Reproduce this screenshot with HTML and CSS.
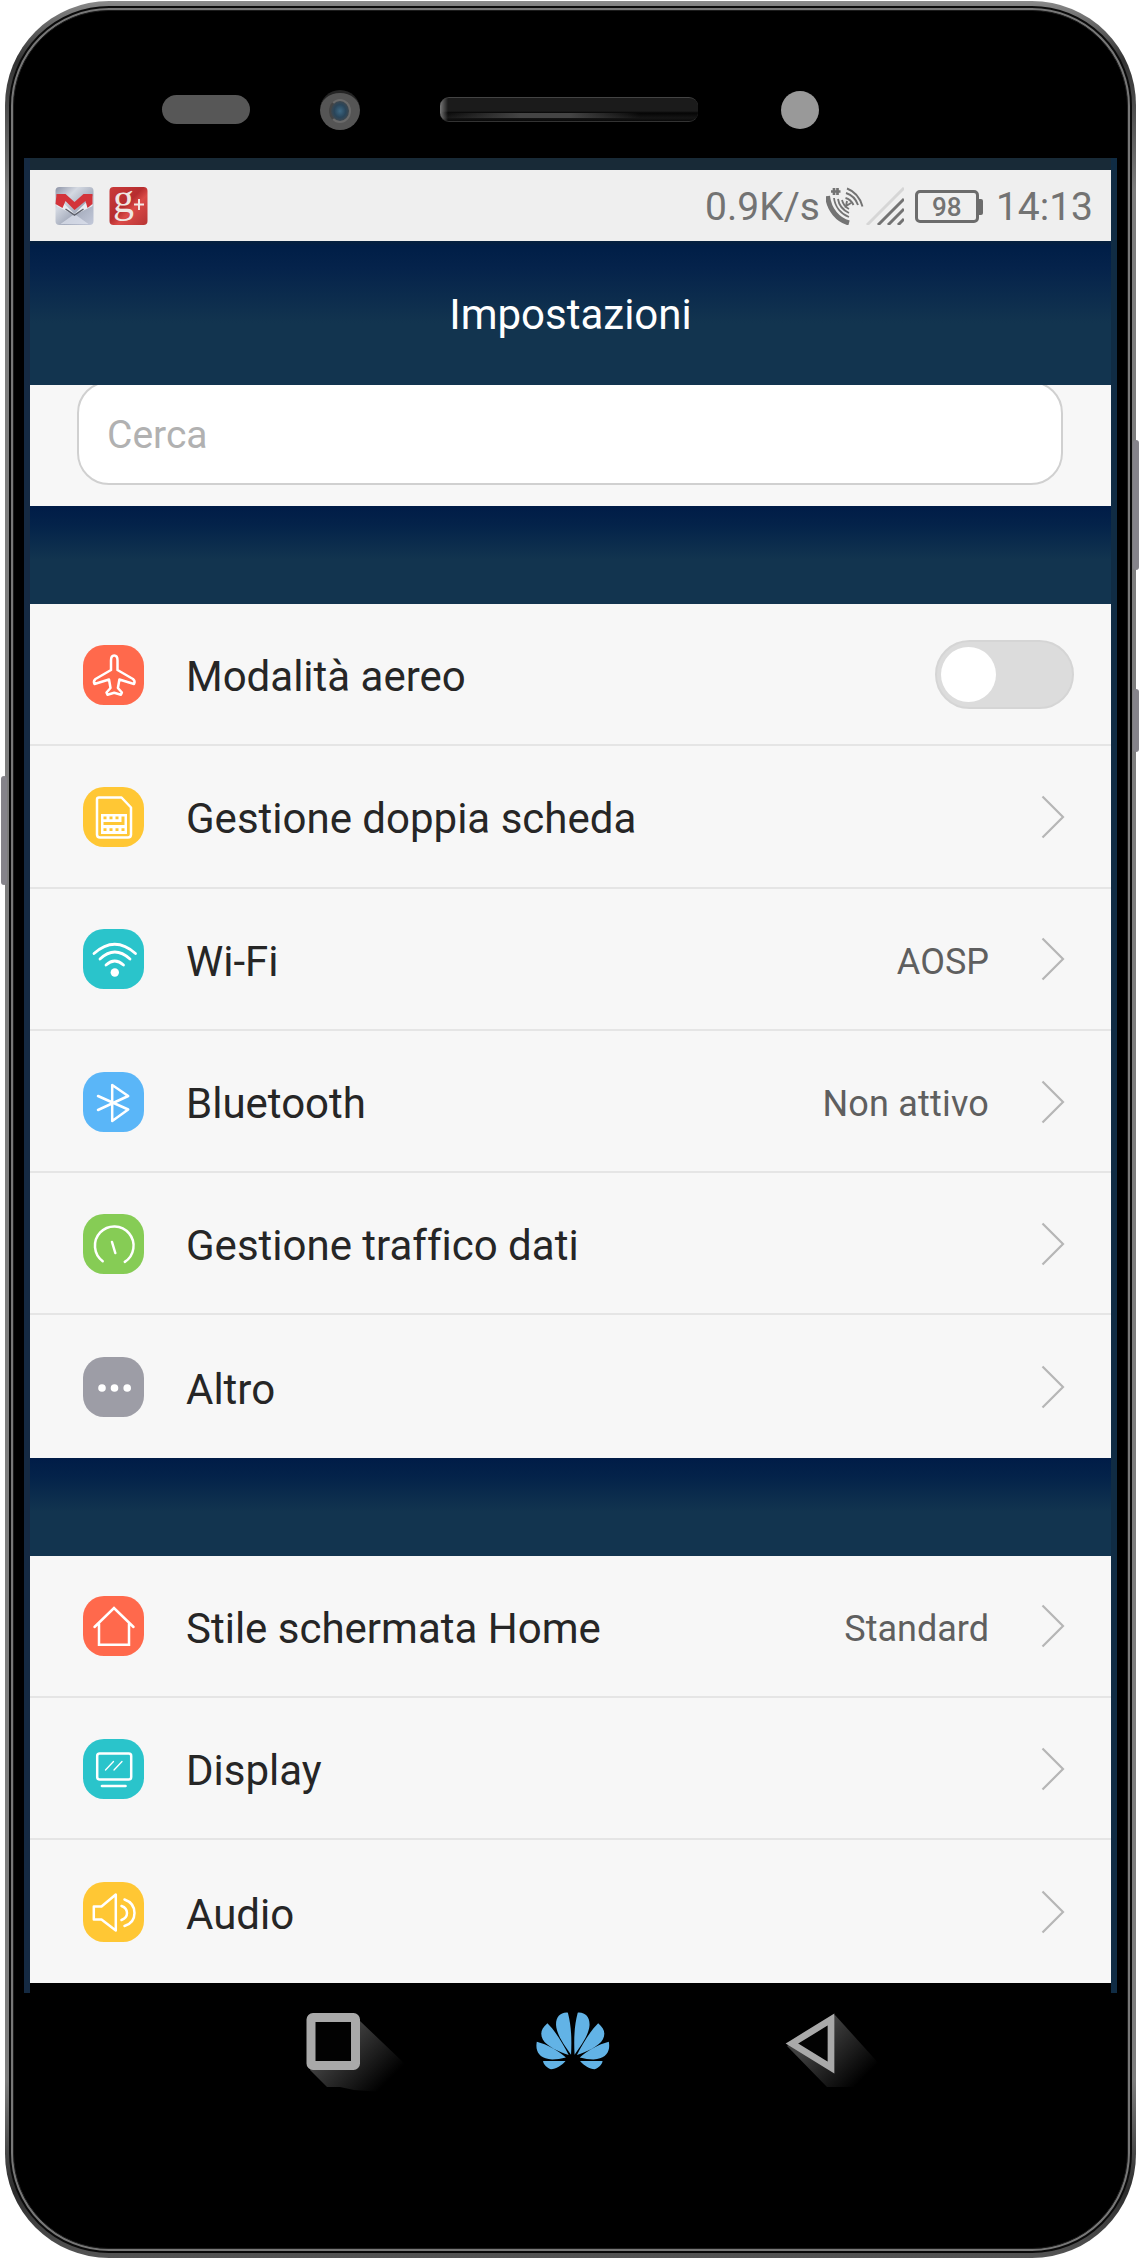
FILE: index.html
```html
<!DOCTYPE html>
<html lang="it">
<head>
<meta charset="utf-8">
<title>Impostazioni</title>
<link rel="stylesheet" href="styles.css">
</head>
<body>
<div class="device">
  <span class="side-button side-button--left"></span>
  <span class="side-button side-button--volume"></span>
  <span class="side-button side-button--power"></span>
  <div class="rim"><div class="rim-line"><div class="glass">

  <div class="sensors">
    <span class="proximity"></span>
    <span class="camera"><span class="lens"></span></span>
    <span class="speaker"></span>
    <span class="flash"></span>
  </div>

  <div class="screen">
    <div class="status-bar">
      <svg class="notif" viewBox="0 0 38 38">
        <defs><linearGradient id="steel" x1="0" y1="0" x2="1" y2="1"><stop offset="0" stop-color="#8d93a6"/><stop offset=".3" stop-color="#d4d9e2"/><stop offset=".6" stop-color="#a6adbd"/><stop offset="1" stop-color="#c3c9da"/></linearGradient>
        <linearGradient id="red" x1="0" y1="0" x2="1" y2="1"><stop offset="0" stop-color="#ca3a3a"/><stop offset=".45" stop-color="#b62d2f"/><stop offset=".6" stop-color="#db4b48"/><stop offset="1" stop-color="#b73434"/></linearGradient></defs>
        <rect width="38" height="38" rx="4" fill="url(#steel)"/>
        <path d="M19 27 5 37h28z" fill="#dfe4ef" opacity=".7"/>
        <path d="M1 9 19 27 37 9v10L19 28 1 19z" fill="#e9edf2"/>
        <path d="M1 7h9l9 8 9-8h9v10l-5 4-2-7-11 9-9-9-3 7-7-4z" fill="#d3343a"/>
        <path d="M10 22 19 28l9-6" fill="none" stroke="#5d606b" stroke-width="1.5"/>
      </svg>
      <svg class="notif" viewBox="0 0 38 38">
        <rect width="38" height="38" rx="4" fill="url(#red)"/>
        <text class="gplus-g" x="3.500" y="24.500">g</text>
        <path d="M29.500 12v11M24.500 17.500h10" stroke="#f3e9e6" stroke-width="2"/>
      </svg>
      <span class="speed">0.9K/s</span>
      <svg class="call-icon" viewBox="0 0 38 38" fill="none" stroke="#737373">
        <path d="M1.500 9C3 23 12 33 23 36" stroke-width="5"/>
        <path d="M8 11c1 9 7 16 15 19M12 12c1 7 5 11 11 14M16 13c1 4 3 7 7 9" stroke-width="1.800"/>
        <path d="M21 1.500c8 3 13 9 15.500 18M20 6c6 2 10 6 12 12M19.500 11c4 1 6 3 8 7M21 14l-1 5 5-3" stroke-width="1.900"/>
        <path d="M8 1v7M11.500 1v7M5 4.500h9.500" stroke-width="2.700"/>
      </svg>
      <svg class="signal-icon" viewBox="0 0 38 38" fill="none" stroke="#737373" stroke-width="3">
        <path d="M1 38 38 1" stroke="#d6d6d6"/>
        <path d="M12 38 38 12M22 38 38 22M32 38 38 32"/>
      </svg>
      <span class="battery"><span class="battery-body">98</span><span class="battery-cap"></span></span>
      <span class="clock">14:13</span>
    </div>

    <div class="title-bar">Impostazioni</div>
    <div class="search-area"><div class="search-box">Cerca</div></div>
    <div class="band"></div>

    <div class="group">
      <div class="row">
        <svg class="icon icon--red" viewBox="0 0 60 60"><path d="M30.700 10.500c-2 0-3.200 2-3.200 5v9.500L12 34q-2.500 2-1 5l14.500-4.500 1.500 8.500-4 4.500 1 2.300 6.700-2 6.700 2 1-2.300-4-4.500 1.500-8.500L50.500 39q1.500-3-1-5L34 25v-9.500c0-3-1.300-5-3.300-5z"/></svg>
        <span class="label">Modalità aereo</span>
        <span class="toggle"><span class="knob"></span></span>
      </div>
      <div class="row">
        <svg class="icon icon--yellow" viewBox="0 0 60 60"><path d="M15.500 10.500H38l9.500 10v27q0 3-3 3H16.500q-3 0-3-3v-35q0-2 2-2z"/><path class="chip" d="M17.500 27h26v20h-26z"/><path class="chip-slots" d="M20 30.800h3M26 30.800h3M32 30.800h3M38 30.800h3M20 36.500h21M38 33.500h3M20 42.700h3M26 42.700h3M32 42.700h3M38 42.700h3"/></svg>
        <span class="label">Gestione doppia scheda</span>
        <svg class="chevron" viewBox="0 0 24 44"><path d="M1.500 1.500 22 22 1.500 42.500"/></svg>
      </div>
      <div class="row">
        <svg class="icon icon--teal" viewBox="0 0 60 60"><path stroke-width="2.800" d="M10.500 24.500q20.700-18.500 41.500 0M16.500 30q14.700-14 30 0M22.500 36q8.700-8 17.500 0"/><circle class="solid" cx="31.300" cy="43.500" r="4.200"/></svg>
        <span class="label">Wi-Fi</span><span class="value">AOSP</span>
        <svg class="chevron" viewBox="0 0 24 44"><path d="M1.500 1.500 22 22 1.500 42.500"/></svg>
      </div>
      <div class="row">
        <svg class="icon icon--blue" viewBox="0 0 60 60"><path d="M14.500 38 44.700 24 28.700 13v36l16-11.500L14.500 24"/></svg>
        <span class="label">Bluetooth</span><span class="value value--wide">Non attivo</span>
        <svg class="chevron" viewBox="0 0 24 44"><path d="M1.500 1.500 22 22 1.500 42.500"/></svg>
      </div>
      <div class="row">
        <svg class="icon icon--green" viewBox="0 0 60 60"><path d="M19.200 47.200A19.300 19.300 0 1 1 41.300 47.900M28.500 28l3.300 11"/></svg>
        <span class="label">Gestione traffico dati</span>
        <svg class="chevron" viewBox="0 0 24 44"><path d="M1.500 1.500 22 22 1.500 42.500"/></svg>
      </div>
      <div class="row">
        <svg class="icon icon--grey" viewBox="0 0 60 60"><g class="solid"><circle cx="18.500" cy="31" r="3.800"/><circle cx="31" cy="31" r="3.800"/><circle cx="43.700" cy="31" r="3.800"/></g></svg>
        <span class="label">Altro</span>
        <svg class="chevron" viewBox="0 0 24 44"><path d="M1.500 1.500 22 22 1.500 42.500"/></svg>
      </div>
    </div>

    <div class="band"></div>

    <div class="group">
      <div class="row">
        <svg class="icon icon--red" viewBox="0 0 60 60"><path stroke-linejoin="miter" d="M11 31 30.500 12 50 31M15.500 28v20.800h30V28"/></svg>
        <span class="label">Stile schermata Home</span><span class="value">Standard</span>
        <svg class="chevron" viewBox="0 0 24 44"><path d="M1.500 1.500 22 22 1.500 42.500"/></svg>
      </div>
      <div class="row">
        <svg class="icon icon--teal" viewBox="0 0 60 60"><rect x="13.700" y="14.500" width="34" height="26" rx="2.500"/><path stroke-width="2.700" d="M18.500 47h23.500"/><path stroke-width="1.300" d="m22 31 8-8.500M30.500 31l8-8.500"/></svg>
        <span class="label">Display</span>
        <svg class="chevron" viewBox="0 0 24 44"><path d="M1.500 1.500 22 22 1.500 42.500"/></svg>
      </div>
      <div class="row">
        <svg class="icon icon--yellow" viewBox="0 0 60 60"><path d="M10.300 24.500H18l14.300-12v36L18 37.500h-7.700zM38 24q5.500 2 5.500 7T38 38M41 17.500q10 3.500 10 13.500T41 44"/></svg>
        <span class="label">Audio</span>
        <svg class="chevron" viewBox="0 0 24 44"><path d="M1.500 1.500 22 22 1.500 42.500"/></svg>
      </div>
    </div>
  </div>

  <div class="nav-bar">
    <svg class="nav-recents" viewBox="0 0 100 76">
      <defs><linearGradient id="fade" x1=".3" y1=".3" x2=".9" y2=".75"><stop offset="0" stop-color="#404040"/><stop offset="1" stop-color="#000"/></linearGradient></defs>
      <path d="M54 8 98 50v22L76 79 48 77 34 74H21L4 57z" fill="url(#fade)"/>
      <rect x="5" y="4.500" width="44.500" height="48" rx="2" fill="#020202" stroke="#a9a9a9" stroke-width="9"/>
    </svg>
    <svg class="nav-home" viewBox="646 154 188 175" preserveAspectRatio="none" fill="#62b3e6">
      <path id="petals" d="M752 156c20-2 31 15 30 38-2 30-22 62-38 89-2-45-1-88 8-127zM804 188c16 16 19 31 12 48-10 22-42 38-66 48 15-35 32-70 54-96zM831 244c4 25-4 46-30 52-12 3-28-1-44-5 22-21 47-39 74-47zM758 302h57c0 10-11 21-20 25-13-1-27-11-37-25z"/>
      <use href="#petals" transform="translate(1479 0) scale(-1 1)"/>
    </svg>
    <svg class="nav-back" viewBox="0 0 98 76">
      <path d="M50 3 97 55v20H42L2 34z" fill="url(#fade)"/>
      <path d="M7 31.500 46 7.500v48z" fill="#020202" stroke="#a9a9a9" stroke-width="6.700"/>
    </svg>
  </div>

  </div></div></div>
</div>
</body>
</html>
```
FILE: styles.css
```css
* { box-sizing: border-box; }

body {
  margin: 0;
  background: #fff;
  font-family: Roboto, "Liberation Sans", sans-serif;
  font-variant-ligatures: none;
  color: #262626;
}

.device {
  position: relative;
  width: 1140px;
  height: 2260px;
  padding: 1px 4px 2px 5px;
}

.rim {
  height: 2257px;
  padding: 5px 4px;
  border-radius: 104px;
  background: linear-gradient(#8b8b8b, #838383 4px, #333 60px, #7d7d7d 190px, #7d7d7d 2080px, #2c2c2c 2190px, #555 2257px);
}

.rim-line {
  height: 100%;
  padding: 2px;
  border: 2px solid #0a0a0a;
  border-radius: 100px;
  background: #777;
}

.glass {
  height: 100%;
  padding: 0 10px;
  border: 1px solid #1c1c1c;
  border-radius: 96px;
  background: #000;
}

.side-button {
  position: absolute;
  width: 6px;
  border-radius: 3px;
  background: #85838a;
}
.side-button--left { left: 1px; top: 776px; height: 109px; }
.side-button--volume { right: 1px; top: 440px; height: 130px; }
.side-button--power { right: 1px; top: 689px; height: 63px; }

.sensors {
  display: flex;
  align-items: center;
  height: 147px;
  padding: 50px 0 0 138px;
}
.proximity { width: 88px; height: 29px; border-radius: 15px; background: #575757; }
.camera {
  display: flex;
  align-items: center;
  justify-content: center;
  width: 40px;
  height: 40px;
  margin-left: 70px;
  border-radius: 50%;
  border-top: 3px solid #242424;
  background: #555;
}
.lens {
  width: 22px;
  height: 24px;
  border: 2px solid #6a6a6a;
  border-left-color: #444;
  border-radius: 50%;
  background: radial-gradient(#3d6883, #29455a 45%, #41474c 75%);
}
.speaker {
  width: 258px;
  height: 25px;
  margin-left: 80px;
  border-radius: 9px;
  border-top: 1px solid #444;
  border-bottom: 1px solid #333;
  background: linear-gradient(to right, #777, transparent 8px), linear-gradient(to right, transparent, #444 80px 130px, transparent 200px) 0 15px / 100% 5px no-repeat, linear-gradient(#1b1b1b 0 13px, #050505 15px, #151515 20px, #080808);
}
.flash { width: 38px; height: 38px; margin-left: 83px; border-radius: 50%; background: #999; }

.screen {
  height: 1835px;
  padding: 12px 6px 0;
  background: linear-gradient(to right, #152a42 6px, transparent 6px 1087px, #102c44 1087px), linear-gradient(#182a37 0 12px, #000 12px);
}

.status-bar {
  display: flex;
  align-items: center;
  height: 71px;
  padding: 0 18px 0 25px;
  background: #efefef;
  color: #737373;
}
.notif { width: 39px; height: 38px; margin-right: 15px; overflow: visible; }
.gplus-g { font: 42px "Liberation Serif", serif; fill: #efe7e3; }
.speed, .clock { font-size: 39px; line-height: 46px; white-space: nowrap; padding-top: 3px; }
.speed { margin-left: auto; }
.call-icon { width: 38px; height: 38px; margin-left: 6px; }
.signal-icon { width: 38px; height: 38px; margin-left: 2px; }
.battery { display: flex; align-items: center; margin: 2px 13px 0 11px; }
.battery-body {
  width: 64px;
  height: 33px;
  border: 3px solid #6c6c6c;
  border-radius: 5px;
  text-align: center;
  font-size: 26px;
  font-weight: 500;
  line-height: 28px;
}
.battery-cap { width: 4px; height: 16px; border-radius: 0 2px 2px 0; background: #6c6c6c; }

.title-bar {
  height: 144px;
  text-align: center;
  font-size: 42px;
  line-height: 147px;
  color: #fff;
  background: linear-gradient(#06203d 0, #001e47 5px, #05234b 28px, #12344f 82px);
}

.search-area {
  height: 121px;
  padding: 0 48px 0 47px;
  overflow: hidden;
  background: #f7f7f7;
}
.search-box {
  height: 104px;
  margin-top: -4px;
  padding-left: 28px;
  border: 2px solid #d0d0d0;
  border-radius: 32px;
  background: #fff;
  font-size: 39px;
  line-height: 105px;
  color: #b1b1b1;
}

.band { height: 98px; background: linear-gradient(#001c47 0, #04234a 20px, #12344f 54px); }

.group { background: #f7f7f7; }
.row {
  display: flex;
  align-items: center;
  height: 142.300px;
  padding: 1px 46px 0 53px;
  border-bottom: 2px solid #e5e5e5;
}
.row:last-child { border-bottom: 0; }

.icon {
  flex: none;
  width: 61px;
  height: 60px;
  border-radius: 21px;
  fill: none;
  stroke: #fff;
  stroke-width: 2.500;
  stroke-linecap: round;
  stroke-linejoin: round;
}
.icon .solid { fill: #fff; stroke: none; }
.icon .chip { fill: #fff; stroke: none; }
.icon .chip-slots { stroke: #ffc734; stroke-width: 2.800; stroke-linecap: butt; }
.icon--red { background: #ff694c; }
.icon--yellow { background: #ffc734; }
.icon--teal { background: #2ac4cb; }
.icon--blue { background: #5ab6f8; }
.icon--green { background: #86cc55; }
.icon--grey { background: #9d9da6; }

.label { flex: 1; margin: 5px 0 0 42px; font-size: 42px; line-height: 50px; white-space: nowrap; }
.value { margin: 5px 52px 0 0; font-size: 36px; line-height: 44px; color: #5f5f5f; white-space: nowrap; }
.value--wide { letter-spacing: .2px; }
.chevron { flex: none; width: 24px; height: 44px; fill: none; stroke: #b6b6b6; stroke-width: 2.200; }

.toggle {
  width: 139px;
  height: 69px;
  margin-right: -9px;
  padding: 5px 4px;
  border: 2px solid #d5d5d5;
  border-radius: 35px;
  background: #dcdcdc;
}
.knob { display: block; width: 55px; height: 55px; border-radius: 50%; background: #fff; }

.nav-bar { display: flex; align-items: flex-start; padding: 19px 0 0 282px; }
.nav-recents { width: 100px; height: 76px; margin-top: 1px; overflow: visible; }
.nav-home { width: 74px; height: 58px; margin-left: 130px; }
.nav-back { width: 98px; height: 76px; margin-left: 175px; }
```
